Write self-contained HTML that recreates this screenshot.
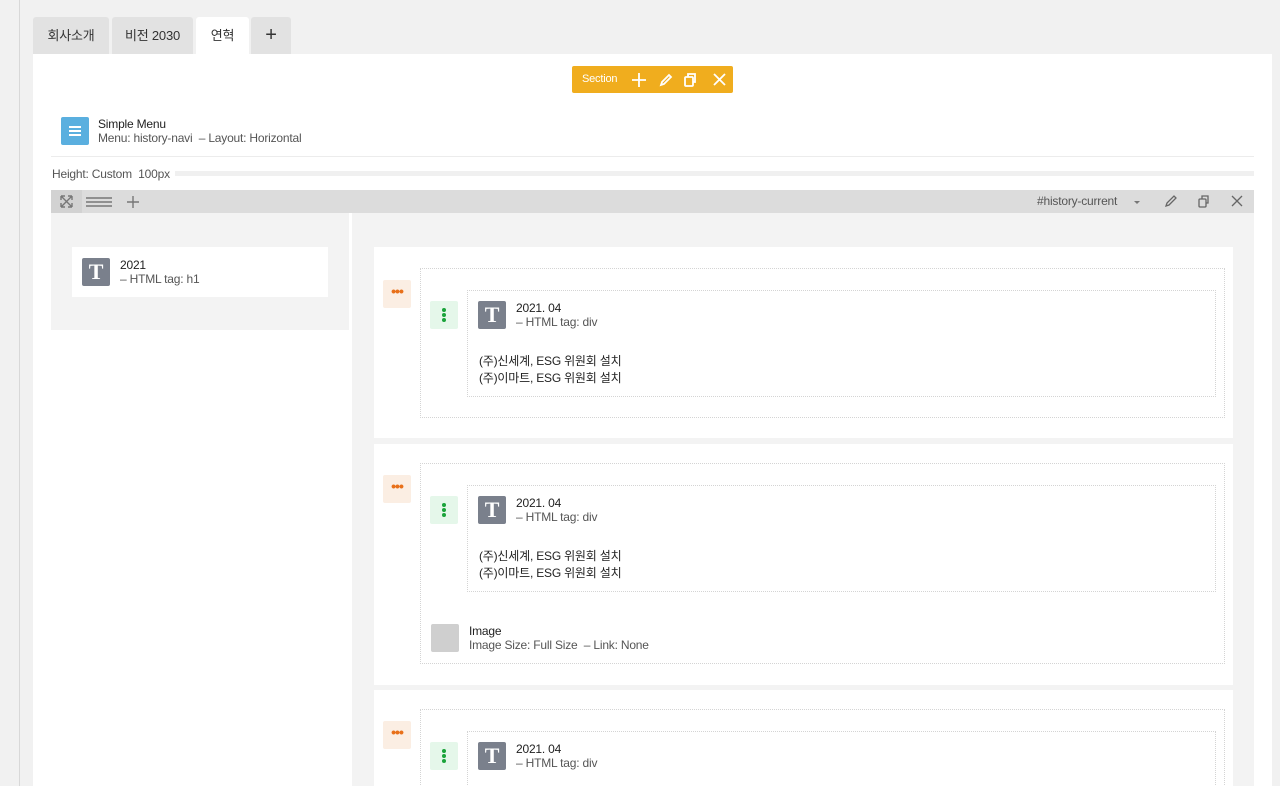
<!DOCTYPE html>
<html style="overflow:hidden;height:786px"><head><meta charset="utf-8"><style>
*{box-sizing:border-box;margin:0;padding:0}
body{width:1280px;height:786px;overflow:hidden;background:#f1f1f1;font-family:"Liberation Sans","Noto Sans CJK KR",sans-serif;font-size:12px;color:#222;position:relative;letter-spacing:-0.2px}
.a{position:absolute}
.tab{position:absolute;top:17px;height:37px;background:#e2e2e2;border-radius:3px 3px 0 0;text-align:center;line-height:37px;font-size:13px;color:#333}
.sub{color:#555}
.t{position:absolute;width:28px;height:28px;background:#7a808c;border-radius:2px;color:#fff;font-family:"Liberation Serif",serif;font-weight:bold;font-size:22px;text-align:center;line-height:28px}
.or{position:absolute;width:28px;height:28px;background:#fbeee3;border-radius:2px;color:#e8701a;text-align:center;font-size:14px;line-height:22px;font-weight:bold;letter-spacing:-1px}
.gr{position:absolute;width:28px;height:28px;background:#e5f7ea;border-radius:2px}
.gr i{position:absolute;left:12px;width:4px;height:4px;border-radius:2px;background:#1aa33a}
.dot{position:absolute;border:1px dotted #d4d4d4}
.card{position:absolute;left:374px;width:859px;background:#fff}
#clip{position:absolute;left:0;top:0;width:1280px;height:786px;overflow:hidden}
</style></head><body><div id="clip">
<div class="a" style="left:19px;top:0;width:1px;height:786px;background:#d8d8d8"></div>
<div class="tab" style="left:33px;width:76px">회사소개</div>
<div class="tab" style="left:112px;width:81px">비전 2030</div>
<div class="tab" style="left:196px;width:53px;background:#fff">연혁</div>
<div class="tab" style="left:251px;width:40px;font-size:20px">+</div>
<div class="a" style="left:33px;top:54px;width:1239px;height:732px;background:#fff"></div>
<div class="a" style="left:572px;top:66px;width:161px;height:27px;background:#f0ad1e;border-radius:2px;color:#fff">
<span class="a" style="left:10px;top:7px;font-size:11px">Section</span>
<svg class="a" style="left:58px;top:6px" width="100" height="16" viewBox="0 0 100 16" fill="none" stroke="#fff" stroke-width="1.8"><path d="M9 1v14M2 8h14"/><path d="M31 13l1-3 7-7 2 2-7 7z"/><rect x="55" y="5" width="8" height="9" rx="1"/><path d="M58 5V2h7v8h-2"/><path d="M84 2l11 11M95 2L84 13"/></svg></div>
<div class="a" style="left:61px;top:117px;width:28px;height:28px;background:#5aafdf;border-radius:2px"><div class="a" style="left:8px;top:9px;width:12px;height:2px;background:#fff;box-shadow:0 4px #fff,0 8px #fff"></div></div>
<div class="a" style="left:98px;top:117px;font-size:12px">Simple Menu</div>
<div class="a sub" style="left:98px;top:131px">Menu: history-navi &nbsp;– Layout: Horizontal</div>
<div class="a" style="left:51px;top:156px;width:1203px;height:1px;background:#ececec"></div>
<div class="a sub" style="left:52px;top:167px">Height: Custom &nbsp;100px</div>
<div class="a" style="left:175px;top:171px;width:1079px;height:5px;background:#f0f0f0"></div>
<div class="a" style="left:51px;top:190px;width:1203px;height:23px;background:#dcdcdc"></div>
<div class="a" style="left:51px;top:190px;width:31px;height:23px;background:#d2d2d2"></div>
<svg class="a" style="left:60px;top:195px" width="80" height="14" fill="none" stroke="#777" stroke-width="1.4"><path d="M1 1l11 11M12 1L1 12M1 1h4M1 1v4M12 12h-4M12 12v-4M12 1h-4M12 1v4M1 12h4M1 12v-4"/><path d="M26 3h26M26 7h26M26 11h26"/><path d="M73 1v12M67 7h12"/></svg>
<div class="a sub" style="left:1037px;top:194px">#history-current</div>
<div class="a" style="left:1134px;top:201px;border:3px solid transparent;border-top:3px solid #777"></div>
<svg class="a" style="left:1164px;top:194px" width="84" height="14" fill="none" stroke="#666" stroke-width="1.3"><path d="M2 12l1-3 7-7 2 2-7 7z"/><rect x="35" y="5" width="7" height="8" rx="1"/><path d="M38 5V2h6v7h-2"/><path d="M68 2l10 10M78 2L68 12"/></svg>
<div class="a" style="left:51px;top:213px;width:298px;height:117px;background:#f3f3f3"></div>
<div class="a" style="left:72px;top:247px;width:256px;height:50px;background:#fff"></div>
<div class="t" style="left:82px;top:258px">T</div>
<div class="a" style="left:120px;top:258px">2021</div>
<div class="a sub" style="left:120px;top:272px">– HTML tag: h1</div>
<div class="a" style="left:352px;top:213px;width:902px;height:573px;background:#f3f3f3"></div>

<div class="card" style="top:247px;height:191px"></div>
<div class="card" style="top:444px;height:241px"></div>
<div class="card" style="top:690px;height:96px"></div>

<div class="dot" style="left:420px;top:268px;width:805px;height:150px"></div>
<div class="or" style="left:383px;top:280px">•••</div>
<div class="gr" style="left:430px;top:301px"><i style="top:7px"></i><i style="top:12px"></i><i style="top:17px"></i></div>
<div class="dot" style="left:467px;top:290px;width:749px;height:107px"></div>
<div class="t" style="left:478px;top:301px">T</div>
<div class="a" style="left:516px;top:301px">2021. 04</div>
<div class="a sub" style="left:516px;top:315px">– HTML tag: div</div>
<div class="a" style="left:479px;top:353px;line-height:17px">(주)신세계, ESG 위원회 설치<br>(주)이마트, ESG 위원회 설치</div>

<div class="dot" style="left:420px;top:463px;width:805px;height:201px"></div>
<div class="or" style="left:383px;top:475px">•••</div>
<div class="gr" style="left:430px;top:496px"><i style="top:7px"></i><i style="top:12px"></i><i style="top:17px"></i></div>
<div class="dot" style="left:467px;top:485px;width:749px;height:107px"></div>
<div class="t" style="left:478px;top:496px">T</div>
<div class="a" style="left:516px;top:496px">2021. 04</div>
<div class="a sub" style="left:516px;top:510px">– HTML tag: div</div>
<div class="a" style="left:479px;top:548px;line-height:17px">(주)신세계, ESG 위원회 설치<br>(주)이마트, ESG 위원회 설치</div>
<div class="a" style="left:431px;top:624px;width:28px;height:28px;background:#cfcfcf;border-radius:2px"></div>
<div class="a" style="left:469px;top:624px">Image</div>
<div class="a sub" style="left:469px;top:638px">Image Size: Full Size &nbsp;– Link: None</div>

<div class="dot" style="left:420px;top:709px;width:805px;height:90px"></div>
<div class="or" style="left:383px;top:721px">•••</div>
<div class="gr" style="left:430px;top:742px"><i style="top:7px"></i><i style="top:12px"></i><i style="top:17px"></i></div>
<div class="dot" style="left:467px;top:731px;width:749px;height:70px"></div>
<div class="t" style="left:478px;top:742px">T</div>
<div class="a" style="left:516px;top:742px">2021. 04</div>
<div class="a sub" style="left:516px;top:756px">– HTML tag: div</div>
</div></body></html>
